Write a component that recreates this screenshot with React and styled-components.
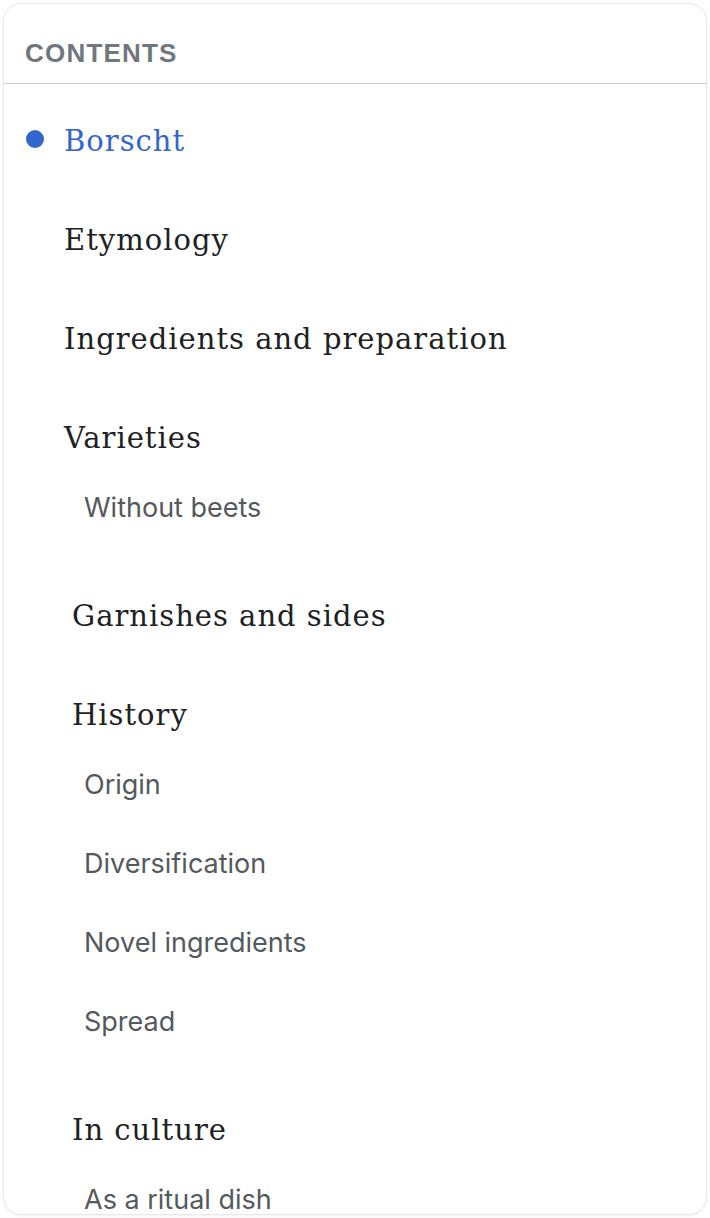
import React from "react";
import styled, { createGlobalStyle } from "styled-components";

const GlobalStyle = createGlobalStyle`
  html, body { margin: 0; padding: 0; background: #ffffff; }
  body { font-family: Inter, "Liberation Sans", Arial, sans-serif; }
`;

const Page = styled.div`
  padding: 3px;
  box-sizing: border-box;
  height: 100vh;
`;

const Card = styled.nav`
  box-sizing: border-box;
  height: 100%;
  border: 1px solid #e6e8ea;
  border-radius: 18px;
  box-shadow: 0 1px 3px rgba(0, 0, 0, 0.06);
  background: #fff;
  overflow: hidden;
  display: flex;
  flex-direction: column;
`;

const Header = styled.div`
  height: 80px;
  box-sizing: border-box;
  padding: 0 21px;
  display: flex;
  align-items: center;
  border-bottom: 1px solid #c8ccd1;
  flex-shrink: 0;
`;

const Title = styled.h2`
  margin: 0;
  font-family: "Liberation Sans", Arial, sans-serif;
  font-size: 26px;
  font-weight: 700;
  letter-spacing: 1.2px;
  color: #72777d;
  line-height: 1;
  padding-top: 18px;
`;

const List = styled.ul`
  list-style: none;
  margin: 0;
  padding: 8px 0 0 22px;
`;

const Section = styled.li`
  margin: 0;
`;

const Heading = styled.a`
  display: flex;
  align-items: center;
  height: 99px;
  box-sizing: border-box;
  padding-left: ${(p) => (p.$shift ? 8 : 0)}px;
  font-family: "DejaVu Serif", Georgia, serif;
  font-size: 29px;
  letter-spacing: 1px;
  line-height: 39px;
  color: ${(p) => (p.$active ? "#3366cc" : "#202122")};
  text-decoration: none;
`;

const MarkerSlot = styled.span`
  width: 38px;
  flex-shrink: 0;
  display: flex;
  align-items: center;
`;

const Dot = styled.span`
  width: 18px;
  height: 18px;
  border-radius: 50%;
  background: #3366cc;
  margin-bottom: 6px;
`;

const SubList = styled.ul`
  list-style: none;
  margin: 0;
  padding: 0 0 0 58px;
`;

const SubItem = styled.li`
  height: 79px;
  box-sizing: border-box;
  padding-top: 2px;
  font-family: Inter, "Liberation Sans", Arial, sans-serif;
  font-size: 27px;
  line-height: 36px;
  color: #54595d;
`;

const sections = [
  { title: "Borscht", active: true },
  { title: "Etymology" },
  { title: "Ingredients and preparation" },
  { title: "Varieties", subs: ["Without beets"] },
  { title: "Garnishes and sides", shift: true },
  { title: "History", shift: true, subs: ["Origin", "Diversification", "Novel ingredients", "Spread"] },
  { title: "In culture", shift: true, subs: ["As a ritual dish"] },
];

export default function App() {
  return (
    <>
      <GlobalStyle />
      <Page>
        <Card>
          <Header>
            <Title>CONTENTS</Title>
          </Header>
          <List>
            {sections.map((s) => (
              <Section key={s.title}>
                <Heading href="#" $active={s.active} $shift={s.shift}>
                  <MarkerSlot>{s.active && <Dot />}</MarkerSlot>
                  {s.title}
                </Heading>
                {s.subs && (
                  <SubList>
                    {s.subs.map((t) => (
                      <SubItem key={t}>{t}</SubItem>
                    ))}
                  </SubList>
                )}
              </Section>
            ))}
          </List>
        </Card>
      </Page>
    </>
  );
}
